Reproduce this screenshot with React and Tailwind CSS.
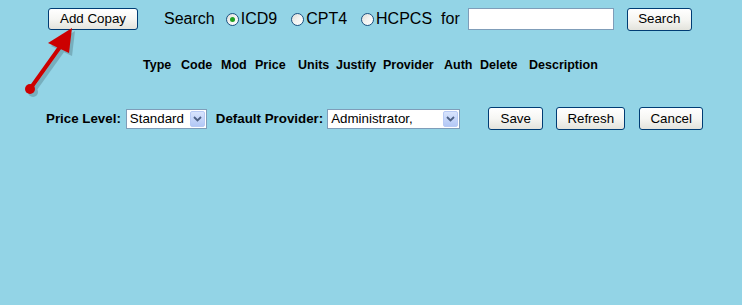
import React from 'react';

const font = { fontFamily: '"Liberation Sans", Arial, sans-serif' };

function XpButton({ children, className = '' }) {
  return (
    <button
      type="button"
      className={`flex items-center justify-center rounded-[3px] border border-[#003c74] bg-gradient-to-b from-white via-[#f6f6f3] to-[#e3e3dc] text-[13.33px] text-black leading-none ${className}`}
    >
      {children}
    </button>
  );
}

function Radio({ checked, label, className = '' }) {
  return (
    <label className={`flex items-center ${className}`}>
      <span className="flex h-[13px] w-[13px] items-center justify-center rounded-full border border-[#1c5180] bg-gradient-to-br from-[#dcdcd6] via-[#f4f4f2] to-white">
        {checked ? <span className="h-[5px] w-[5px] rounded-full bg-[#21a121]" /> : null}
      </span>
      <span className="ml-[2px] text-[16px] leading-none">{label}</span>
    </label>
  );
}

function XpSelect({ value, className = '' }) {
  return (
    <div className={`flex h-[20px] items-center border border-[#7f9db9] bg-white ${className}`}>
      <span className="flex-1 truncate pl-[3px] text-[13.33px] leading-none">{value}</span>
      <span className="mr-[1px] flex h-[16px] w-[15px] items-center justify-center rounded-[2px] border border-[#b8caf5] bg-gradient-to-b from-[#d8e4fd] to-[#b3c8f6]">
        <svg width="9" height="6" viewBox="0 0 9 6">
          <path d="M1 1 L4.5 4.5 L8 1" fill="none" stroke="#4d6185" strokeWidth="1.8" />
        </svg>
      </span>
    </div>
  );
}

const columns = [
  ['Type', 'w-[38px]'],
  ['Code', 'w-[40px]'],
  ['Mod', 'w-[34px]'],
  ['Price', 'w-[43px]'],
  ['Units', 'w-[38px]'],
  ['Justify', 'w-[47px]'],
  ['Provider', 'w-[61px]'],
  ['Auth', 'w-[36px]'],
  ['Delete', 'w-[49px]'],
  ['Description', ''],
];

export default function App() {
  return (
    <div className="relative h-[305px] w-[742px] overflow-hidden bg-[#93d4e6] text-black" style={font}>
      {/* search row */}
      <div className="flex h-[22px] items-center pl-[48px] pt-0 mt-[8px]">
        <XpButton className="h-[22px] w-[90px]">Add Copay</XpButton>
        <span className="ml-[26px] text-[16px] leading-none">Search</span>
        <Radio checked label="ICD9" className="ml-[11px]" />
        <Radio label="CPT4" className="ml-[14px]" />
        <Radio label="HCPCS" className="ml-[14px]" />
        <span className="ml-[9px] text-[16px] leading-none">for</span>
        <input
          type="text"
          className="ml-[8px] h-[22px] w-[146px] border border-[#7f9db9] bg-white outline-none"
        />
        <XpButton className="ml-[13px] h-[23px] w-[65px]">Search</XpButton>
      </div>

      {/* column headers */}
      <div className="mt-[28px] flex pl-[143px] text-[12.5px] font-bold leading-[15px]">
        {columns.map(([name, w]) => (
          <span key={name} className={w}>
            {name}
          </span>
        ))}
      </div>

      {/* price level row */}
      <div className="mt-[34px] flex h-[23px] items-center pl-[46px] text-[13.33px]">
        <span className="font-bold">Price Level:</span>
        <XpSelect value="Standard" className="ml-[5px] w-[81px]" />
        <span className="ml-[9px] font-bold">Default Provider:</span>
        <XpSelect value="Administrator," className="ml-[4px] w-[133px]" />
        <XpButton className="ml-[28px] h-[23px] w-[55px]">Save</XpButton>
        <XpButton className="ml-[13px] h-[23px] w-[69px]">Refresh</XpButton>
        <XpButton className="ml-[14px] h-[23px] w-[64px]">Cancel</XpButton>
      </div>

      {/* annotation arrow */}
      <svg className="pointer-events-none absolute left-0 top-0" width="120" height="110">
        <g transform="translate(3,3)" fill="#5d8a96" opacity="0.5">
          <line x1="30" y1="89" x2="60" y2="47" stroke="#5d8a96" strokeWidth="4" />
          <circle cx="30" cy="89" r="5" />
          <polygon points="72,28 48,43 69,53" />
        </g>
        <line x1="30" y1="89" x2="60" y2="47" stroke="#cc0000" strokeWidth="4" />
        <circle cx="30" cy="89" r="5" fill="#cc0000" />
        <polygon points="72,28 48,43 69,53" fill="#cc0000" />
      </svg>
    </div>
  );
}
